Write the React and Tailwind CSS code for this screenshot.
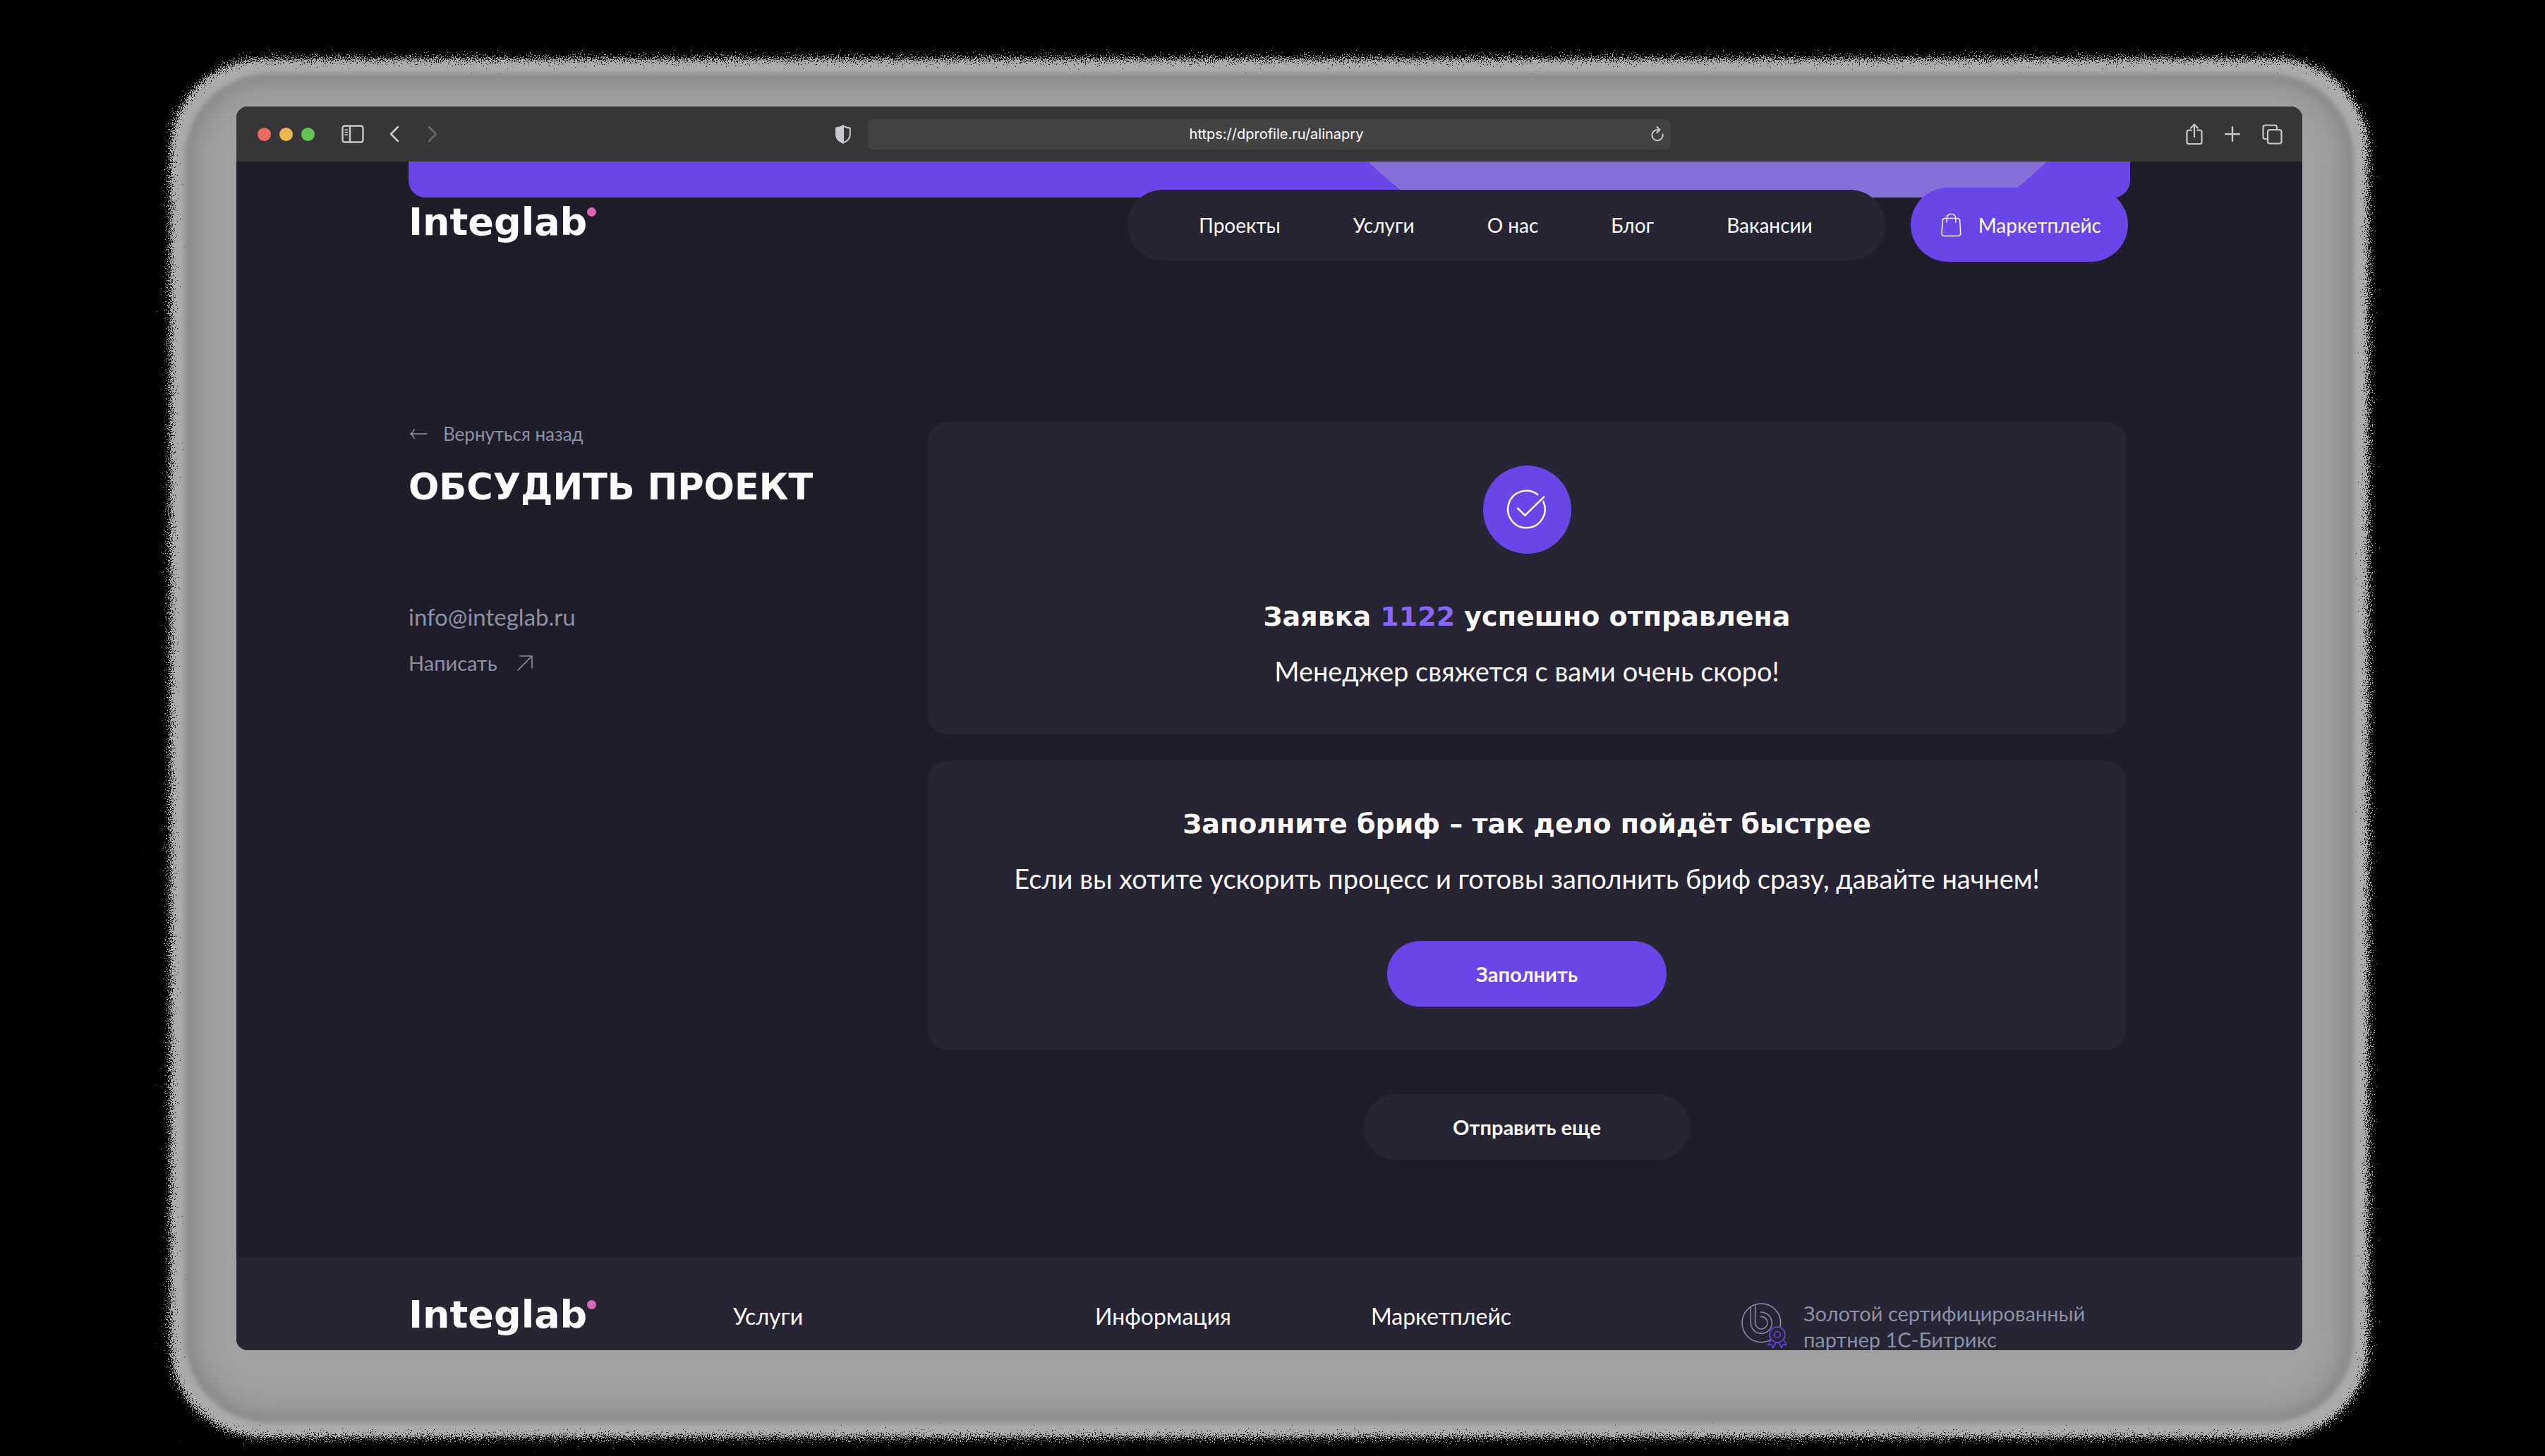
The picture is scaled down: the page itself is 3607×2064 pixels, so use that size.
const heading = "font-['DejaVu_Sans',sans-serif] font-bold text-[#fcfbff]";

const navLinks = ["Проекты", "Услуги", "О нас", "Блог", "Вакансии"];
const footerLinks = ["Услуги", "Информация", "Маркетплейс"];

function GrainFilter() {
  return (
    <svg className="absolute size-0" aria-hidden="true">
      <filter id="grain" x="-2%" y="-3%" width="104%" height="106%" colorInterpolationFilters="sRGB">
        <feGaussianBlur in="SourceAlpha" stdDeviation="12" result="soft" />
        <feTurbulence type="fractalNoise" baseFrequency="0.7" numOctaves="2" seed="4" result="noise" />
        <feComposite in="soft" in2="noise" operator="arithmetic" k1="0" k2="1" k3="1.2" k4="-0.6" result="mix" />
        <feComponentTransfer in="mix" result="mask">
          <feFuncA type="linear" slope="40" intercept="-20" />
        </feComponentTransfer>
        <feFlood floodColor="#ababab" />
        <feComposite in2="mask" operator="in" />
      </filter>
    </svg>
  );
}

function Halo() {
  return (
    <div aria-hidden="true" className="absolute -top-[68px] -right-[94px] -bottom-[124px] -left-[94px]">
      <GrainFilter />
      <div className="absolute inset-0 rounded-[130px] bg-[#ababab] [filter:url(#grain)]" />
      <div className="absolute inset-[21px] rounded-[120px] bg-[#a1a1a1] shadow-[inset_0_0_10px_12px_#8d8d8d,inset_0_0_16px_24px_#969696,inset_0_0_24px_36px_#9c9c9c] blur-[3px]" />
    </div>
  );
}

function Logo() {
  return (
    <a href="#home" className={`flex items-start text-[54px] leading-[64px] ${heading}`}>
      Integlab
      <span className="mt-[11px] size-[13px] rounded-full bg-[#d967b3]" />
    </a>
  );
}

function BrowserBar() {
  return (
    <div className="grid h-[78px] shrink-0 grid-cols-[1fr_1138px_1fr] items-center bg-[#363636] text-[#c9c8cf]">
      <div className="flex items-center pr-6 pl-[30px]">
        <div className="flex gap-3">
          <span className="size-[19px] rounded-full bg-[#ec6a5e]" />
          <span className="size-[19px] rounded-full bg-[#f0b74f]" />
          <span className="size-[19px] rounded-full bg-[#61c554]" />
        </div>
        <button aria-label="Боковая панель" className="ml-[38px]">
          <svg width="32" height="26" viewBox="0 0 32 26" fill="none" stroke="currentColor" strokeWidth="2.4">
            <rect x="1.5" y="1.5" width="29" height="23" rx="3" />
            <path d="M12 1.5v23" />
            <path d="M4.5 7H9M4.5 10.500H9M4.500 14H9" strokeWidth="1.6" />
          </svg>
        </button>
        <button aria-label="Назад" className="ml-9">
          <svg width="14" height="24" viewBox="0 0 14 24" fill="none" stroke="currentColor" strokeWidth="2.6" strokeLinecap="round" strokeLinejoin="round">
            <path d="M12 2L2 12l10 10" />
          </svg>
        </button>
        <button aria-label="Вперёд" className="ml-10 text-[#68676b]">
          <svg width="14" height="24" viewBox="0 0 14 24" fill="none" stroke="currentColor" strokeWidth="2.6" strokeLinecap="round" strokeLinejoin="round">
            <path d="M2 2l10 10L2 22" />
          </svg>
        </button>
        <button aria-label="Конфиденциальность" className="ml-auto">
          <svg width="22" height="27" viewBox="0 0 22 27" stroke="currentColor" strokeWidth="2" fill="none" strokeLinejoin="round">
            <path d="M11 1.200C8 3.500 5 4 1.200 4.500V14c0 6 4 9 9.800 11.600C16.800 23 20.800 20 20.800 14V4.500C17 4 14 3.500 11 1.200z" />
            <path d="M11 1.200C8 3.500 5 4 1.200 4.500V14c0 6 4 9 9.800 11.600z" fill="currentColor" />
          </svg>
        </button>
      </div>
      <div className="flex h-[43px] items-center rounded-lg bg-[#434343] pr-2.5 pl-12">
        <input
          aria-label="Адрес"
          readOnly
          value="https://dprofile.ru/alinapry"
          className="min-w-0 flex-1 bg-transparent text-center text-xl text-white outline-none font-['Inter',sans-serif]"
        />
        <button aria-label="Обновить">
          <svg width="18" height="22" viewBox="0 0 18 22" fill="none" stroke="currentColor" strokeWidth="2" strokeLinecap="round" strokeLinejoin="round">
            <path d="M16.500 11.500A7.600 7.600 0 1 1 9 5h3" />
            <path d="M8.500 1l4 4-4 4" />
          </svg>
        </button>
      </div>
      <div className="flex items-center justify-end gap-[31px] pr-7">
        <button aria-label="Поделиться">
          <svg width="24" height="31" viewBox="0 0 24 31" fill="none" stroke="currentColor" strokeWidth="2.200" strokeLinecap="round" strokeLinejoin="round">
            <path d="M8 9.500H4a2.500 2.500 0 0 0-2.500 2.500v14.500A2.500 2.500 0 0 0 4 29h16a2.500 2.500 0 0 0 2.500-2.500V12A2.500 2.500 0 0 0 20 9.500h-4" />
            <path d="M12 19V2M7 6.500l5-5 5 5" />
          </svg>
        </button>
        <button aria-label="Новая вкладка">
          <svg width="22" height="22" viewBox="0 0 22 22" fill="none" stroke="currentColor" strokeWidth="2.400" strokeLinecap="round">
            <path d="M11 1.200v19.600M1.200 11h19.600" />
          </svg>
        </button>
        <button aria-label="Вкладки">
          <svg width="29" height="29" viewBox="0 0 29 29" fill="none" stroke="currentColor" strokeWidth="2.200" strokeLinejoin="round">
            <rect x="8" y="8" width="19.500" height="19.500" rx="3" />
            <path d="M7.500 21H4.500a3 3 0 0 1-3-3V4.500a3 3 0 0 1 3-3H18a3 3 0 0 1 3 3V7.500" />
          </svg>
        </button>
      </div>
    </div>
  );
}

function SiteHeader() {
  return (
    <div className="px-61">
      <div className="relative h-[51px] overflow-hidden rounded-b-3xl bg-[#6a46e8]">
        <div className="absolute -right-[97px] -bottom-[142px] size-[1392px] rounded-full bg-[#8570da]" />
      </div>
      <header className="relative -mt-3.5 flex items-center pr-[3px] text-[28px] leading-9 text-[#fcfbff]">
        <div className="pb-2">
          <Logo />
        </div>
        <nav className="ml-auto flex h-25 items-center gap-[103px] rounded-full bg-[#272433] pr-[103px] pl-[101px]">
          {navLinks.map((label) => (
            <a key={label} href="#nav">{label}</a>
          ))}
        </nav>
        <a href="#market" className="ml-9 flex h-[105px] items-center gap-6 rounded-full bg-[#6a46e8] pr-[38px] pl-[43px]">
          <svg width="29" height="34" viewBox="151 126 88 102" fill="none" stroke="currentColor" strokeWidth="4.500" strokeLinecap="round" strokeLinejoin="round">
            <path d="M168 148H222Q231 148 232 157L235 213Q235 224 225 224H164Q154 224 154 213L158 157Q159 148 168 148Z" />
            <path d="M175 165V149Q177 129 195 129T214 149V165" />
          </svg>
          Маркетплейс
        </a>
      </header>
    </div>
  );
}

function Aside() {
  return (
    <aside className="flex flex-col items-start text-[#8b91a6]">
      <a href="#back" className="flex items-center gap-[22px] pl-0.5 text-[26px] leading-[34px]">
        <svg width="25" height="16" viewBox="0 0 25 16" fill="none" stroke="currentColor" strokeWidth="1.500" strokeLinecap="round" strokeLinejoin="round">
          <path d="M24 8H1M6 1.500Q4.500 6 1 8Q4.500 10 6 14.500" />
        </svg>
        Вернуться назад
      </a>
      <h1 className={`mt-[27px] text-[51px] leading-16 ${heading}`}>ОБСУДИТЬ ПРОЕКТ</h1>
      <a href="mailto:info@integlab.ru" className="mt-[131px] text-[33px] leading-10">info@integlab.ru</a>
      <a href="#write" className="mt-7 flex items-center gap-7 text-[29px] leading-9">
        Написать
        <svg width="22" height="22" viewBox="0 0 22 22" fill="none" stroke="currentColor" strokeWidth="1.600" strokeLinecap="round" strokeLinejoin="round">
          <path d="M1 21L21 1M4 1H21V18" />
        </svg>
      </a>
    </aside>
  );
}

function Results() {
  return (
    <div className="flex flex-col items-center pr-1.5 text-center text-[#fcfbff]">
      <section className="flex w-full flex-col items-center rounded-[28px] bg-[#272433] pt-[62px] pb-[66px]">
        <div className="size-[125px] rounded-full bg-[#6a46e8]">
          <svg className="size-full" viewBox="35 33 375 375" fill="none" stroke="currentColor" strokeWidth="7.500" strokeLinecap="round" strokeLinejoin="round">
            <path d="M267 156A79 79 0 1 0 291 186" />
            <path d="M182 214L213 245L294 166" />
          </svg>
        </div>
        <h2 className={`mt-[65px] text-[38px] leading-12 ${heading}`}>
          Заявка <span className="text-[#8768fb]">1122</span> успешно отправлена
        </h2>
        <p className="mt-[29px] text-[38px] leading-12">Менеджер свяжется с вами очень скоро!</p>
      </section>
      <section className="mt-[37px] flex w-full flex-col items-center rounded-[28px] bg-[#272433] pt-[66px] pb-[61px]">
        <h2 className={`text-[38px] leading-12 ${heading}`}>Заполните бриф – так дело пойдёт быстрее</h2>
        <p className="mt-[29px] text-[38px] leading-12">
          Если вы хотите ускорить процесс и готовы заполнить бриф сразу, давайте начнем!
        </p>
        <button className="mt-[65px] h-[93px] rounded-full bg-[#6a46e8] px-[126px] text-[29px] font-bold">Заполнить</button>
      </section>
      <button className="mt-[63px] h-[93px] rounded-full bg-[#272433] px-[126px] text-[29px] font-bold">Отправить еще</button>
    </div>
  );
}

function PartnerBadge() {
  return (
    <div className="mt-[11px] flex items-start gap-[23px] text-[#8b91a6]">
      <svg className="mt-1 shrink-0" width="65" height="67" viewBox="52 62 195 201" fill="none" stroke="currentColor" strokeWidth="4.500" strokeLinecap="round" strokeLinejoin="round">
        <circle cx="137" cy="147" r="82" />
        <path d="M92 80V147A45 45 0 1 0 134 102" />
        <path d="M111 70V147A26 26 0 1 0 134 121" />
        <g stroke="#6a46e8">
          <path d="M179 218L166 241L181 239L187 252L200 230L210 230L223 252L229 239L244 241L231 218" fill="#272433" />
          <circle cx="205" cy="197" r="33" fill="#272433" />
          <circle cx="205" cy="197" r="13" />
        </g>
      </svg>
      <p className="text-[29px] leading-[37px]">
        Золотой сертифицированный
        <br />
        партнер 1С-Битрикс
      </p>
    </div>
  );
}

export default function App() {
  return (
    <div className="h-screen overflow-hidden bg-black pt-[151px] pr-[344px] pb-[150px] pl-[335px] font-['Lato',sans-serif]">
      <div className="relative h-full">
        <Halo />
        <div className="relative flex h-full flex-col overflow-hidden rounded-2xl bg-[#201d2b]">
          <BrowserBar />
          <SiteHeader />
          <main className="mt-[227px] grid grid-cols-[736px_1fr] px-61">
            <Aside />
            <Results />
          </main>
          <footer className="mt-[138px] grid shrink-0 grid-cols-[460px_513px_391px_525px_1fr] items-start bg-[#272433] px-61 pt-[50px] pb-16 text-[32px] leading-[68px] text-[#fcfbff]">
            <Logo />
            {footerLinks.map((label) => (
              <a key={label} href="#section">{label}</a>
            ))}
            <PartnerBadge />
          </footer>
        </div>
      </div>
    </div>
  );
}
